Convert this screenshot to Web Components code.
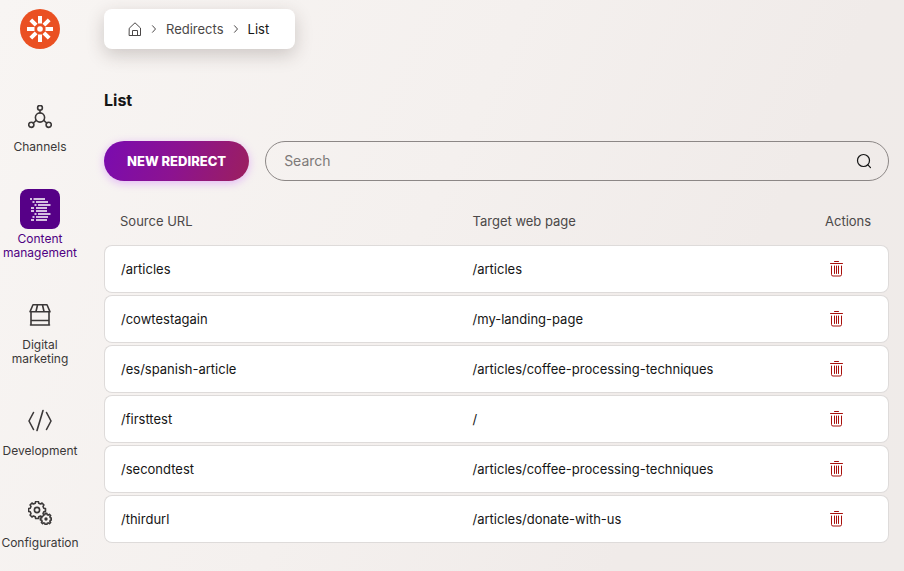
<!DOCTYPE html>
<html lang="en">
<head>
<meta charset="utf-8">
<title>Redirects - List</title>
<style>
  html { min-height: 100%; background: linear-gradient(115deg, #f8f5f3 0%, #f4f0ee 45%, #f0ebe9 75%, #efebe9 100%); }
  body { margin: 0; color: #151515; font: 13px/20px Inter, "Liberation Sans", sans-serif; }
</style>
</head>
<body>
<redirect-app>
  <app-sidebar slot="sidebar">
    <nav-item icon="channels">Channels</nav-item>
    <nav-item icon="content" active>Content management</nav-item>
    <nav-item icon="shop">Digital marketing</nav-item>
    <nav-item icon="code">Development</nav-item>
    <nav-item icon="gears">Configuration</nav-item>
  </app-sidebar>
  <bread-crumbs>
    <crumb-link icon="home" label="Home"></crumb-link>
    <crumb-link>Redirects</crumb-link>
    <crumb-link current>List</crumb-link>
  </bread-crumbs>
  <page-title>List</page-title>
  <tool-bar>
    <primary-button>New redirect</primary-button>
    <search-field placeholder="Search"></search-field>
  </tool-bar>
  <redirect-table></redirect-table>
</redirect-app>

<script>
const svg = (size, body, width = 1.5) =>
  `<svg viewBox="0 0 ${size} ${size}" width="${size}" height="${size}" fill="none" stroke="currentColor" stroke-width="${width}" stroke-linecap="round" stroke-linejoin="round" aria-hidden="true">${body}</svg>`;
const gear = (cx, cy, n, ro, ri, from = 0, to = n) => {
  const step = Math.PI * 2 / n;
  const pts = [];
  for (let i = from; i < to; i++) {
    [[-.32, ri], [-.2, ro], [.2, ro], [.32, ri]].forEach(([o, r]) => {
      const a = (i + o) * step - Math.PI / 2;
      pts.push((cx + r * Math.cos(a)).toFixed(2) + ' ' + (cy + r * Math.sin(a)).toFixed(2));
    });
  }
  return 'M' + pts.join('L') + (to - from === n ? 'Z' : '');
};
const icons = {
  channels: svg(24, '<circle cx="12" cy="12.5" r="4.6"/><circle cx="12" cy="2.8" r="2.4"/><circle cx="3.3" cy="19.8" r="2.6"/><circle cx="20.7" cy="19.8" r="2.6"/><path d="M12 5.2V8M8.3 15.4l-3 2.6M15.7 15.4l3 2.6"/>', 1.6),
  content: svg(24, '<path stroke-linecap="butt" d="M2 2h2M5.500 2H17M4.500 5h2M8 5h12M6.500 8h2M10 8h12.500M3 11h3M8 11h11M3 14h3M8 14h11M6.500 17h2M10 17h12.500M4.500 20h2M8 20h12M3 23h3M8 23h11"/>', 1.7),
  shop: svg(24, '<path d="M5 1.800h14l3 7H2zM9.500 2l-1.500 6.500M14.500 2l1.500 6.500M3 9v13M21 9v13M3 17.500h18M2.500 22h19"/>', 1.6),
  code: svg(24, '<path d="M5.500 3.500L1 12l4.500 8.500M18.500 3.500L23 12l-4.500 8.500M15 1.500L9 21.500"/>', 1.6),
  gears: svg(24, `<path d="${gear(9, 9, 8, 8.6, 7)}"/><circle cx="9" cy="9" r="2.6"/><path d="${gear(18, 18, 8, 5.7, 4.5, 0, 7)}"/><circle cx="18" cy="18" r=".9"/>`, 1.6),
  home: svg(14, '<path d="M1.500 6L7 .8 12.500 6v7.500h-11zM4.500 13.500v-5h5v5"/>', 1),
  search: svg(16, '<circle cx="8.5" cy="7.5" r="6"/><path d="M12.900 11.900l2.600 2.700"/>', 1.2),
  trash: svg(16, '<path d="M1.500 2.500h12M5.500 .500h4M2.500 5v8.500q0 1.500 1.500 1.500h7q1.500 0 1.500-1.500V5M5.500 5v7.500M7.500 5v7.500M9.500 5v7.500"/>', 1),
  chevron: svg(8, '<path d="M2.500 .7L5.500 4 2.500 7.300"/>', 1)
};

class BaseElement extends HTMLElement {
  constructor() { super(); this.attachShadow({ mode: 'open' }); }
  connectedCallback() {
    const t = document.createElement('template');
    t.innerHTML = `<style>*{box-sizing:border-box}svg{display:block}${this.css()}</style>${this.html()}`;
    this.shadowRoot.replaceChildren(t.content.cloneNode(true));
  }
}
const define = (name, css, html) => customElements.define(name, class extends BaseElement {
  css() { return css; }
  html() { return html(this); }
});

define('redirect-app', `
  :host { display: grid; grid-template-columns: 80px minmax(0, 1fr); }
  main { padding: 9px 15px 24px 24px; }
`, () => `<slot name="sidebar"></slot><main><slot></slot></main>`);

define('app-sidebar', `
  :host { display: block; padding-top: 9px; }
  .logo { display: block; width: 40px; height: 40px; margin: 0 auto 48px; border-radius: 50%; }
  nav { display: flex; flex-direction: column; gap: 35px; }
`, () => `<a class="logo" href="#" aria-label="Dashboard"><svg width="40" height="40" viewBox="0 0 40 40" fill="none" stroke="#fff" stroke-width="4"><circle cx="20" cy="20" r="20" fill="#ea5022" stroke="none"/><path d="M20 7v7.500M20 25.500V33M7 20h7.500M25.500 20H33M10.800 10.800l5.300 5.300M23.900 23.900l5.300 5.300M10.800 29.200l5.300-5.300M23.900 16.100l5.300-5.300"/><circle cx="20" cy="20" r="2.8" fill="#fff" stroke="none"/></svg></a><nav><slot></slot></nav>`);

define('nav-item', `
  :host { display: block; color: #3b3838; }
  :host([active]) { color: #4f0082; }
  a { display: flex; flex-direction: column; align-items: center; gap: 3px; color: inherit; text-decoration: none; font-size: 12px; line-height: 14px; text-align: center; }
  .tile { display: grid; place-items: center; width: 40px; height: 40px; border-radius: 8px; }
  :host([active]) .tile { background: #560087; color: #fff; }
`, el => `<a href="#"><span class="tile">${icons[el.getAttribute('icon')]}</span><span><slot></slot></span></a>`);

define('bread-crumbs', `
  :host { display: block; }
  nav { display: inline-flex; align-items: center; gap: 8px; height: 40px; padding: 0 26px 0 24px; border-radius: 8px; background: #fff; box-shadow: 0 6px 18px rgba(60, 45, 40, .22); vertical-align: top; }
`, () => `<nav aria-label="Breadcrumb"><slot></slot></nav>`);

define('crumb-link', `
  :host { display: flex; align-items: center; gap: 8px; color: #4b4848; }
  :host([current]) { color: #151515; }
  a { color: inherit; text-decoration: none; }
`, el => {
  const icon = el.getAttribute('icon');
  const label = icon ? ` aria-label="${el.getAttribute('label')}"` : '';
  return `<a href="#"${label}>${icon ? icons[icon] : '<slot></slot>'}</a>${el.hasAttribute('current') ? '' : icons.chevron}`;
});

define('page-title', `
  :host { display: block; margin: 40px 0 29px; }
  h1 { margin: 0; font-size: 16px; line-height: 23px; font-weight: 700; }
`, () => `<h1><slot></slot></h1>`);

define('tool-bar', `:host { display: flex; gap: 16px; }`, () => `<slot></slot>`);

define('primary-button', `
  :host { display: block; }
  button { height: 40px; padding: 0 23px; border: 0; border-radius: 20px; color: #fff; font: 800 13px/20px Inter, "Liberation Sans", sans-serif; text-transform: uppercase; background: linear-gradient(110deg, #7a0bb0 0%, #8c1390 50%, #9c1f5e 100%); box-shadow: 0 2px 8px rgba(190, 70, 255, .35); }
`, () => `<button type="button"><slot></slot></button>`);

define('search-field', `
  :host { display: block; flex: 1; min-width: 0; }
  label { display: flex; align-items: center; height: 40px; padding: 0 17px 0 18px; border: 1px solid #8c8786; border-radius: 20px; }
  input { flex: 1; min-width: 0; padding: 0; border: 0; outline: 0; background: none; color: inherit; font: 14px/20px Inter, sans-serif; }
  input::placeholder { color: #7d7978; opacity: 1; }
`, el => `<label><input type="search" aria-label="Search" placeholder="${el.getAttribute('placeholder')}">${icons.search}</label>`);

const redirects = [
  ['/articles', '/articles'],
  ['/cowtestagain', '/my-landing-page'],
  ['/es/spanish-article', '/articles/coffee-processing-techniques'],
  ['/firsttest', '/'],
  ['/secondtest', '/articles/coffee-processing-techniques'],
  ['/thirdurl', '/articles/donate-with-us']
];
define('redirect-table', `
  :host { display: block; margin-top: 16px; }
  table { width: 100%; table-layout: fixed; border-collapse: separate; border-spacing: 0 2px; }
  th { height: 44px; padding: 0 16px; font-weight: 400; text-align: left; color: #4b4848; }
  .actions { width: 80px; white-space: nowrap; }
  td { height: 48px; padding: 0 16px; background: #fff; border: 1px solid #dedbda; border-width: 1px 0; overflow-wrap: anywhere; }
  td:first-child { border-left-width: 1px; border-radius: 8px 0 0 8px; }
  td:last-child { border-right-width: 1px; border-radius: 0 8px 8px 0; }
  button { display: grid; place-items: center; width: 24px; height: 24px; padding: 0; border: 0; background: none; color: #a8100c; }
`, () => `<table><thead><tr><th scope="col">Source URL</th><th scope="col">Target web page</th><th scope="col" class="actions">Actions</th></tr></thead><tbody>${
  redirects.map(([from, to]) => `<tr><td>${from}</td><td>${to}</td><td><button type="button" aria-label="Delete ${from}">${icons.trash}</button></td></tr>`).join('')
}</tbody></table>`);
</script>
</body>
</html>
